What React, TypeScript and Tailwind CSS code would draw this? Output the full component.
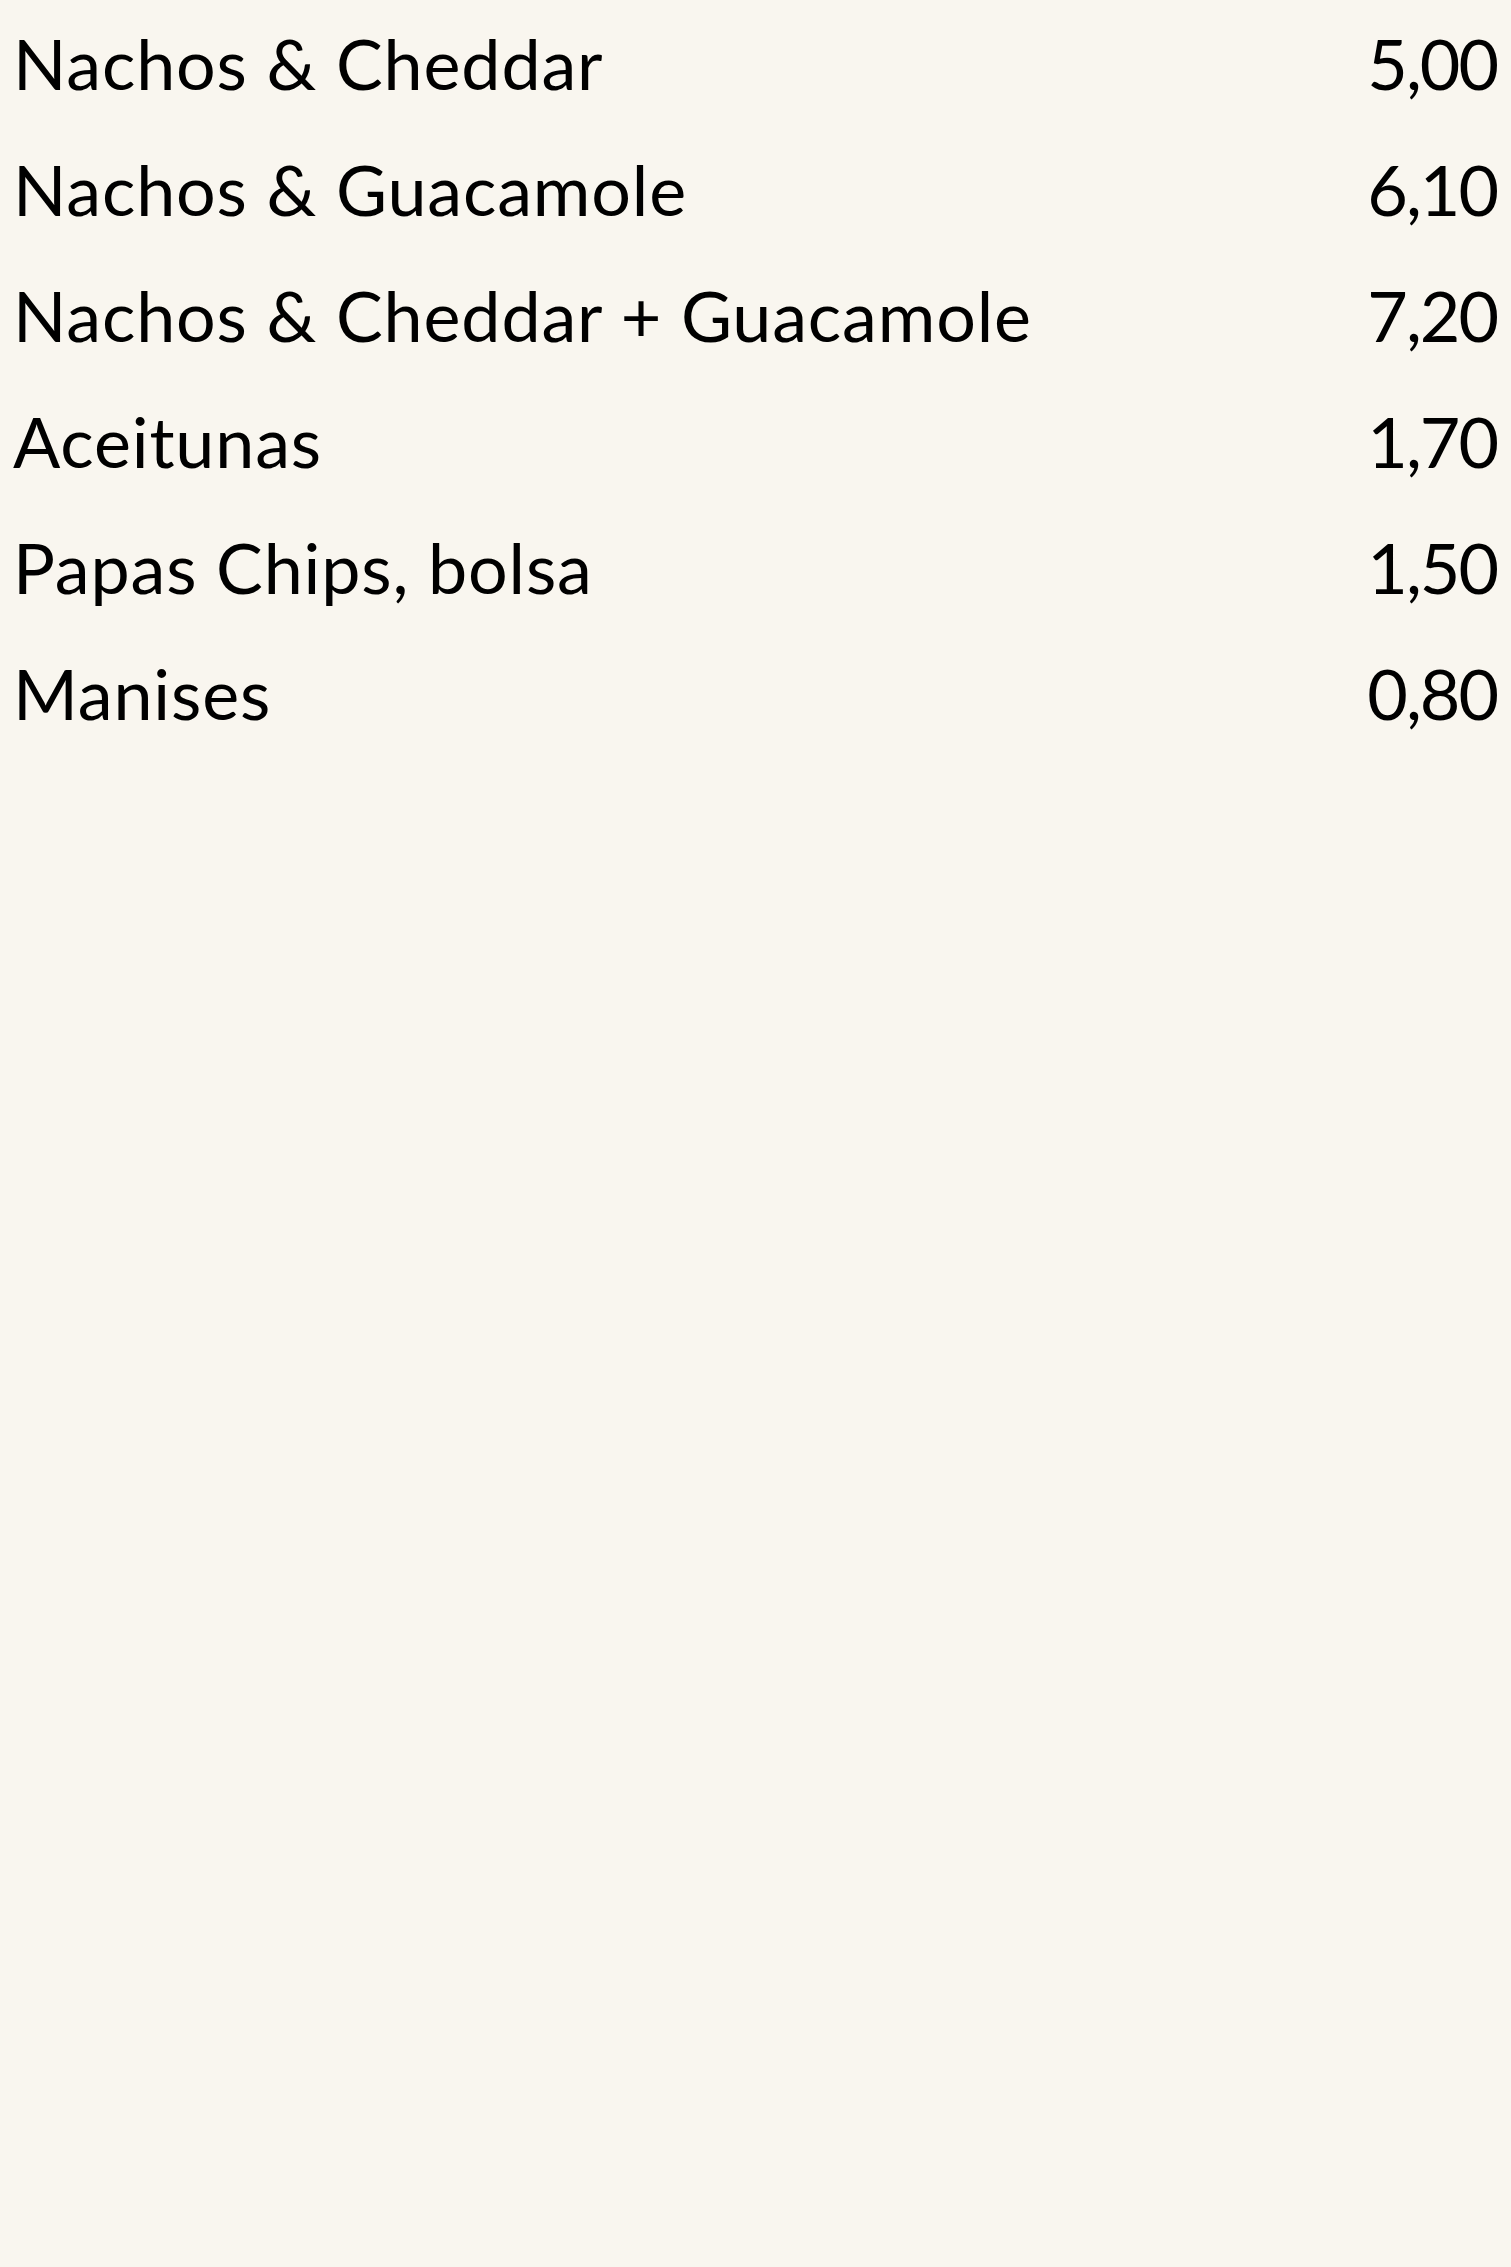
import React from 'react';

const items = [
  { name: 'Nachos & Cheddar', price: '5,00' },
  { name: 'Nachos & Guacamole', price: '6,10' },
  { name: 'Nachos & Cheddar + Guacamole', price: '7,20' },
  { name: 'Aceitunas', price: '1,70' },
  { name: 'Papas Chips, bolsa', price: '1,50' },
  { name: 'Manises', price: '0,80' },
];

const App = () => {
  return (
    <div
      className="min-h-screen w-full bg-[#f9f6ef] text-black pl-[13px] pr-[14px]"
      style={{ fontFamily: 'Lato, "Noto Sans", sans-serif' }}
    >
      {items.map((item) => (
        <div key={item.name} className="flex justify-between items-center h-[126px] text-[70px] leading-[126px]">
          <span className="tracking-[0.85px]">{item.name}</span>
          <span className="tracking-[-2px]">{item.price}</span>
        </div>
      ))}
    </div>
  );
};

export default App;
